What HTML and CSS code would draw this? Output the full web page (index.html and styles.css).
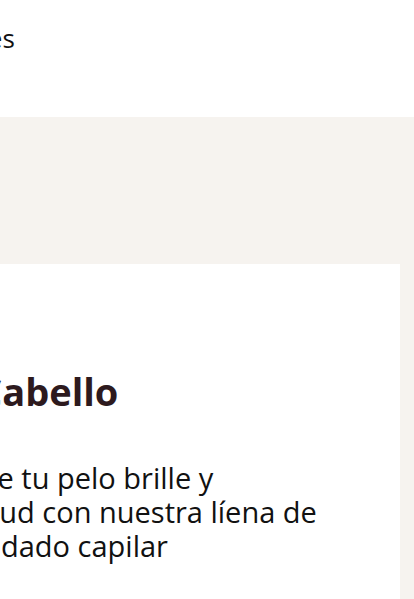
FILE: index.html
```html
<!DOCTYPE html>
<html lang="es">
<head>
<meta charset="utf-8">
<link rel="stylesheet" href="styles.css">
</head>
<body>
<header class="topbar">
  <span class="nav-link">Opiniones</span>
</header>
<section class="hero">
  <article class="card">
    <h1 class="card-title">Cabello</h1>
    <p class="card-text">que tu pelo brille y<br>salud con nuestra líena de<br>cuidado capilar</p>
  </article>
</section>
</body>
</html>
```
FILE: styles.css
```css
html, body {
  margin: 0;
  padding: 0;
  overflow: hidden;
  background: #ffffff;
  font-family: "Open Sans", "Liberation Sans", sans-serif;
  color: #111111;
}
.topbar {
  height: 117px;
  display: flex;
  align-items: flex-start;
}
.nav-link {
  font-size: 26px;
  line-height: 30px;
  margin-top: 23px;
  margin-left: -109px;
  white-space: nowrap;
}
.hero {
  background: #f6f3ef;
  padding: 147px 14px 0 0;
  height: 400px;
}
.card {
  background: #ffffff;
  height: 100%;
  padding-top: 102px;
}
.card-title {
  margin: 0 0 0 -22px;
  font-size: 38px;
  line-height: 50px;
  font-weight: 700;
  color: #2d1a1e;
}
.card-text {
  margin: 45px 0 0 -38px;
  font-size: 29px;
  line-height: 34px;
  color: #111111;
}
```
